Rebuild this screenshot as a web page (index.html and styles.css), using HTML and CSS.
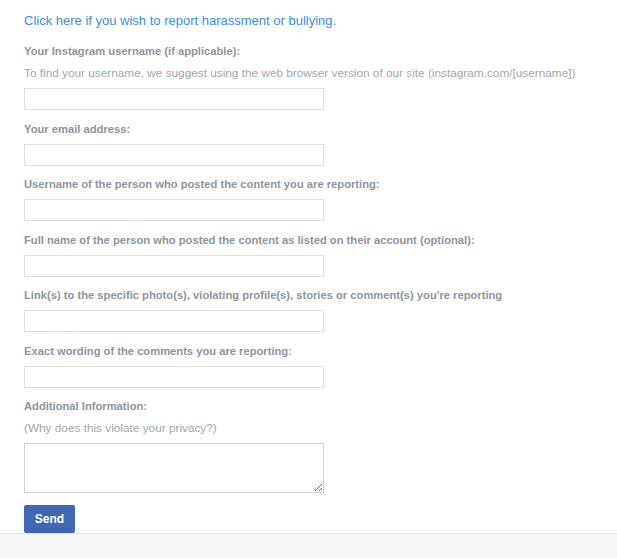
FILE: index.html
```html
<!DOCTYPE html>
<html lang="en">
<head>
    <meta charset="UTF-8">
    <meta name="viewport" content="width=device-width, initial-scale=1.0">
    <title>Report a Privacy Violation</title>
    <link rel="stylesheet" href="styles.css">
</head>
<body>
    <main class="report-form">
        <a class="report-link" href="#">Click here if you wish to report harassment or bullying.</a>
        <form>
            <div class="field">
                <label for="username">Your Instagram username (if applicable):</label>
                <p class="hint">To find your username, we suggest using the web browser version of our site (instagram.com/[username])</p>
                <input type="text" id="username">
            </div>
            <div class="field">
                <label for="email">Your email address:</label>
                <input type="text" id="email">
            </div>
            <div class="field">
                <label for="poster">Username of the person who posted the content you are reporting:</label>
                <input type="text" id="poster">
            </div>
            <div class="field">
                <label for="fullname">Full name of the person who posted the content as listed on their account (optional):</label>
                <input type="text" id="fullname">
            </div>
            <div class="field">
                <label for="links">Link(s) to the specific photo(s), violating profile(s), stories or comment(s) you're reporting</label>
                <input type="text" id="links">
            </div>
            <div class="field">
                <label for="wording">Exact wording of the comments you are reporting:</label>
                <input type="text" id="wording">
            </div>
            <div class="field">
                <label for="info">Additional Information:</label>
                <p class="hint">(Why does this violate your privacy?)</p>
                <textarea id="info"></textarea>
            </div>
            <button type="button">Send</button>
        </form>
    </main>
    <footer></footer>
</body>
</html>
```

FILE: styles.css
```css
/* Global Styles */
body {
    font-family: "Liberation Sans", Arial, sans-serif;
    margin: 0;
    padding: 0;
    background-color: #fff;
    color: #90949c;
}

.report-form {
    padding: 13px 24px 0;
}

.report-link {
    display: block;
    color: #3b8de6;
    font-size: 13px;
    text-decoration: none;
    line-height: 16px;
    margin-bottom: 15px;
}

.field {
    margin-bottom: 11.5px;
}

label {
    display: block;
    font-size: 11.2px;
    font-weight: bold;
    color: #90949c;
    line-height: 14px;
    margin-bottom: 8px;
}

.hint {
    font-size: 11.8px;
    color: #a2a6ad;
    margin: 0 0 8px;
    line-height: 14px;
}

input,
textarea {
    display: block;
    box-sizing: border-box;
    width: 300px;
    height: 22px;
    margin: 0;
    border: 1px solid #dddfe2;
    background: #fff;
}

textarea {
    height: 50px;
    border-color: #ccd0d5;
    resize: vertical;
}

button {
    display: block;
    width: 51px;
    height: 28px;
    border: none;
    border-radius: 2px;
    background-color: #4267b2;
    color: #fff;
    font-family: inherit;
    font-size: 12px;
    font-weight: bold;
    cursor: pointer;
}

footer {
    height: 25px;
    border-top: 1px solid #dddfe2;
    background-color: #f7f7f7;
}
```
